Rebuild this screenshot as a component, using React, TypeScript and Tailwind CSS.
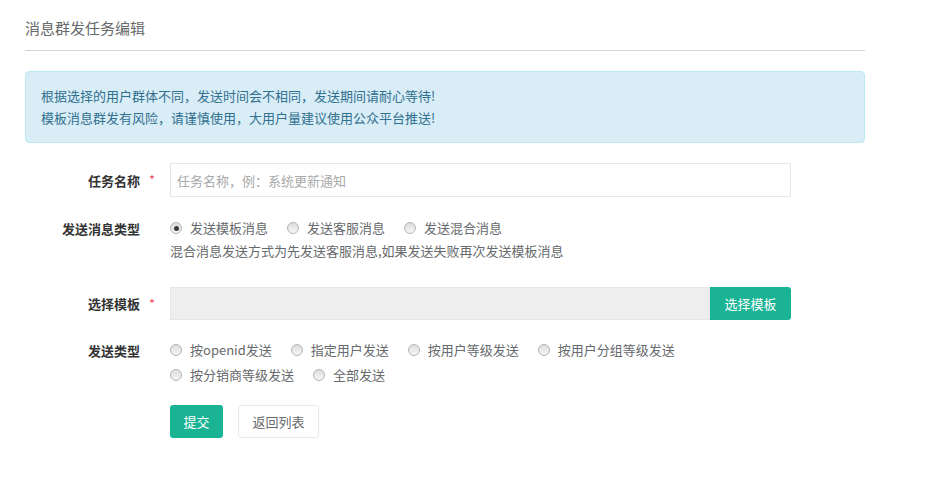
import React from 'react';

const font = { fontFamily: '"Noto Sans CJK SC", "Noto Sans", sans-serif' };

function Radio({ label, checked = false }: { label: string; checked?: boolean }) {
  return (
    <label className="flex items-center mr-[19px] h-[24px]">
      <span className="w-[12px] h-[12px] rounded-full border border-[#b5b5b5] bg-linear-to-b from-[#dcdcdc] to-[#f7f7f7] flex items-center justify-center mr-[8px]">
        {checked && <span className="w-[5px] h-[5px] rounded-full bg-[#3a3a3a]" />}
      </span>
      <span>{label}</span>
    </label>
  );
}

function Row({ label, required = false, children, className = '' }: { label: string; required?: boolean; children: React.ReactNode; className?: string }) {
  return (
    <div className={`flex ${className}`}>
      <div className="w-[115px] text-right font-bold text-[#333] text-[13px] leading-[24px] pt-[1px]">{label}</div>
      <div className="w-[30px] text-[#ed5565] text-[13px] leading-[24px] pl-[9px]">{required ? '*' : ''}</div>
      <div className="w-[621px]">{children}</div>
    </div>
  );
}

export default function App() {
  const sendTypes = ['按openid发送', '指定用户发送', '按用户等级发送', '按用户分组等级发送', '按分销商等级发送', '全部发送'];

  return (
    <div className="min-h-screen bg-white text-[#676a6c] text-[13px] px-[25px]" style={font}>
      <div className="w-[840px]">
        {/* Header */}
        <div className="h-[51px] border-b border-[#d4d4d4] pt-[17px]">
          <h1 className="text-[15px] leading-[22px] text-[#676a6c] font-normal">消息群发任务编辑</h1>
        </div>

        {/* Notice */}
        <div className="mt-[20px] bg-[#d9edf7] border border-[#bce8f1] rounded-[4px] py-[13px] px-[15px] text-[#31708f] leading-[22px]">
          <p>根据选择的用户群体不同，发送时间会不相同，发送期间请耐心等待!</p>
          <p>模板消息群发有风险，请谨慎使用，大用户量建议使用公众平台推送!</p>
        </div>

        {/* Form */}
        <Row label="任务名称" required className="mt-[20px] items-center">
          <input
            className="w-full h-[34px] border border-[#e5e6e7] px-[6px] text-[13px] outline-none placeholder:text-[#a9a9a9]"
            placeholder="任务名称，例：系统更新通知"
            style={font}
          />
        </Row>

        <Row label="发送消息类型" className="mt-[19px]">
          <div className="flex">
            <Radio label="发送模板消息" checked />
            <Radio label="发送客服消息" />
            <Radio label="发送混合消息" />
          </div>
          <p className="leading-[22px]">混合消息发送方式为先发送客服消息,如果发送失败再次发送模板消息</p>
        </Row>

        <Row label="选择模板" required className="mt-[25px] items-center">
          <div className="flex h-[33px]">
            <div className="flex-1 bg-[#eeeeee] border border-[#e5e6e7]" />
            <button className="w-[81px] bg-[#1ab394] text-white rounded-r-[3px] text-[13px]" style={font}>选择模板</button>
          </div>
        </Row>

        <Row label="发送类型" className="mt-[18px]">
          <div className="flex flex-wrap leading-[24px] gap-y-[1px]">
            {sendTypes.map((t) => (
              <Radio key={t} label={t} />
            ))}
          </div>
        </Row>

        <div className="flex mt-[18px] ml-[145px] gap-[15px]">
          <button className="h-[33px] w-[53px] bg-[#1ab394] text-white rounded-[3px] text-[13px]" style={font}>提交</button>
          <button className="h-[33px] w-[81px] bg-white border border-[#e7eaec] text-[#676a6c] rounded-[3px] text-[13px]" style={font}>返回列表</button>
        </div>
      </div>
    </div>
  );
}
